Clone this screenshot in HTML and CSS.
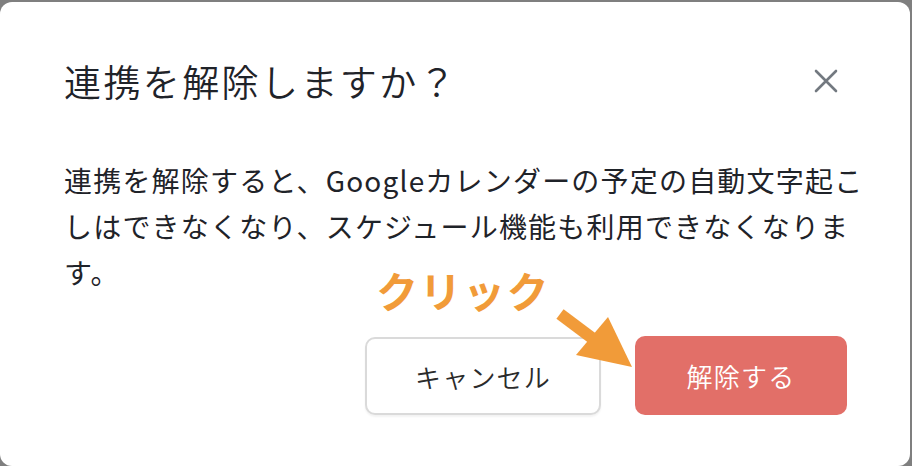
FILE: index.html
```html
<!DOCTYPE html>
<html lang="ja">
<head>
<meta charset="UTF-8">
<title>連携を解除しますか？</title>
<link rel="stylesheet" href="styles.css">
</head>
<body>
<div class="dialog">
	<div class="dialog-head">
		<h1 class="dialog-title">連携を解除しますか？</h1>
		<button class="close-btn" type="button" aria-label="閉じる">
			<svg width="24" height="24" viewBox="0 0 24 24">
				<path d="M2 2 L22 22 M22 2 L2 22" stroke="#737980" stroke-width="2.6" stroke-linecap="round" fill="none"/>
			</svg>
		</button>
	</div>
	<p class="dialog-text">連携を解除すると、Googleカレンダーの予定の自動文字起こしはできなくなり、スケジュール機能も利用できなくなります。</p>
	<div class="dialog-foot">
		<button class="btn btn-cancel" type="button">キャンセル</button>
		<button class="btn btn-danger" type="button">解除する</button>
	</div>

	<!-- annotation -->
	<div class="note">クリック</div>
	<svg class="note-arrow" width="912" height="466" viewBox="0 0 912 466">
		<line x1="560" y1="314" x2="596" y2="341" stroke="#f19b39" stroke-width="12"/>
		<polygon points="608,317 576,355 632,367" fill="#f19b39"/>
	</svg>
</div>
</body>
</html>
```

FILE: styles.css
```css
html, body {
	margin: 0;
	padding: 0;
	width: 100%;
	height: 100%;
	overflow: hidden;
}
body {
	background-color: #7f7f7f;
	padding-top: 2px;
	box-sizing: border-box;
	font-family: "Noto Sans CJK JP", "Noto Sans", sans-serif;
	color: #1f2329;
}
.dialog {
	position: relative;
	width: 910px;
	height: 464px;
	box-sizing: border-box;
	padding: 52px 63px 0 64px;
	background-color: #ffffff;
	border-radius: 12px;
}
.dialog-head {
	display: flex;
	align-items: center;
	justify-content: space-between;
}
.dialog-title {
	margin: 0;
	font-size: 37px;
	font-weight: 350;
	line-height: 54px;
	letter-spacing: 2.4px;
}
.close-btn {
	display: flex;
	padding: 0;
	margin-right: 9px;
	border: 0;
	background: none;
}
.dialog-text {
	width: 805px;
	margin: 49px 0 0 0;
	font-size: 28px;
	line-height: 46px;
	letter-spacing: 1.2px;
}
.dialog-foot {
	display: flex;
	justify-content: flex-end;
	align-items: flex-start;
	gap: 34px;
	margin-top: 41px;
}
.btn {
	box-sizing: border-box;
	border-radius: 10px;
	font-family: "Noto Sans CJK JP", sans-serif;
	font-size: 26px;
	font-weight: 350;
	letter-spacing: 1.2px;
	cursor: pointer;
}
.btn-cancel {
	width: 236px;
	height: 78px;
	margin-top: 1px;
	border: 2px solid #dadada;
	background-color: #ffffff;
	color: #2b2b2b;
	box-shadow: 0 2px 2px rgba(0, 0, 0, 0.05);
}
.btn-danger {
	width: 212px;
	height: 79px;
	border: 0;
	background-color: #e26f68;
	color: #ffffff;
}
.note {
	position: absolute;
	left: 376px;
	top: 266px;
	font-size: 42px;
	font-weight: 700;
	line-height: 44px;
	letter-spacing: 1.5px;
	color: #f19b39;
}
.note-arrow {
	position: absolute;
	left: 0;
	top: -2px;
	pointer-events: none;
}
```
